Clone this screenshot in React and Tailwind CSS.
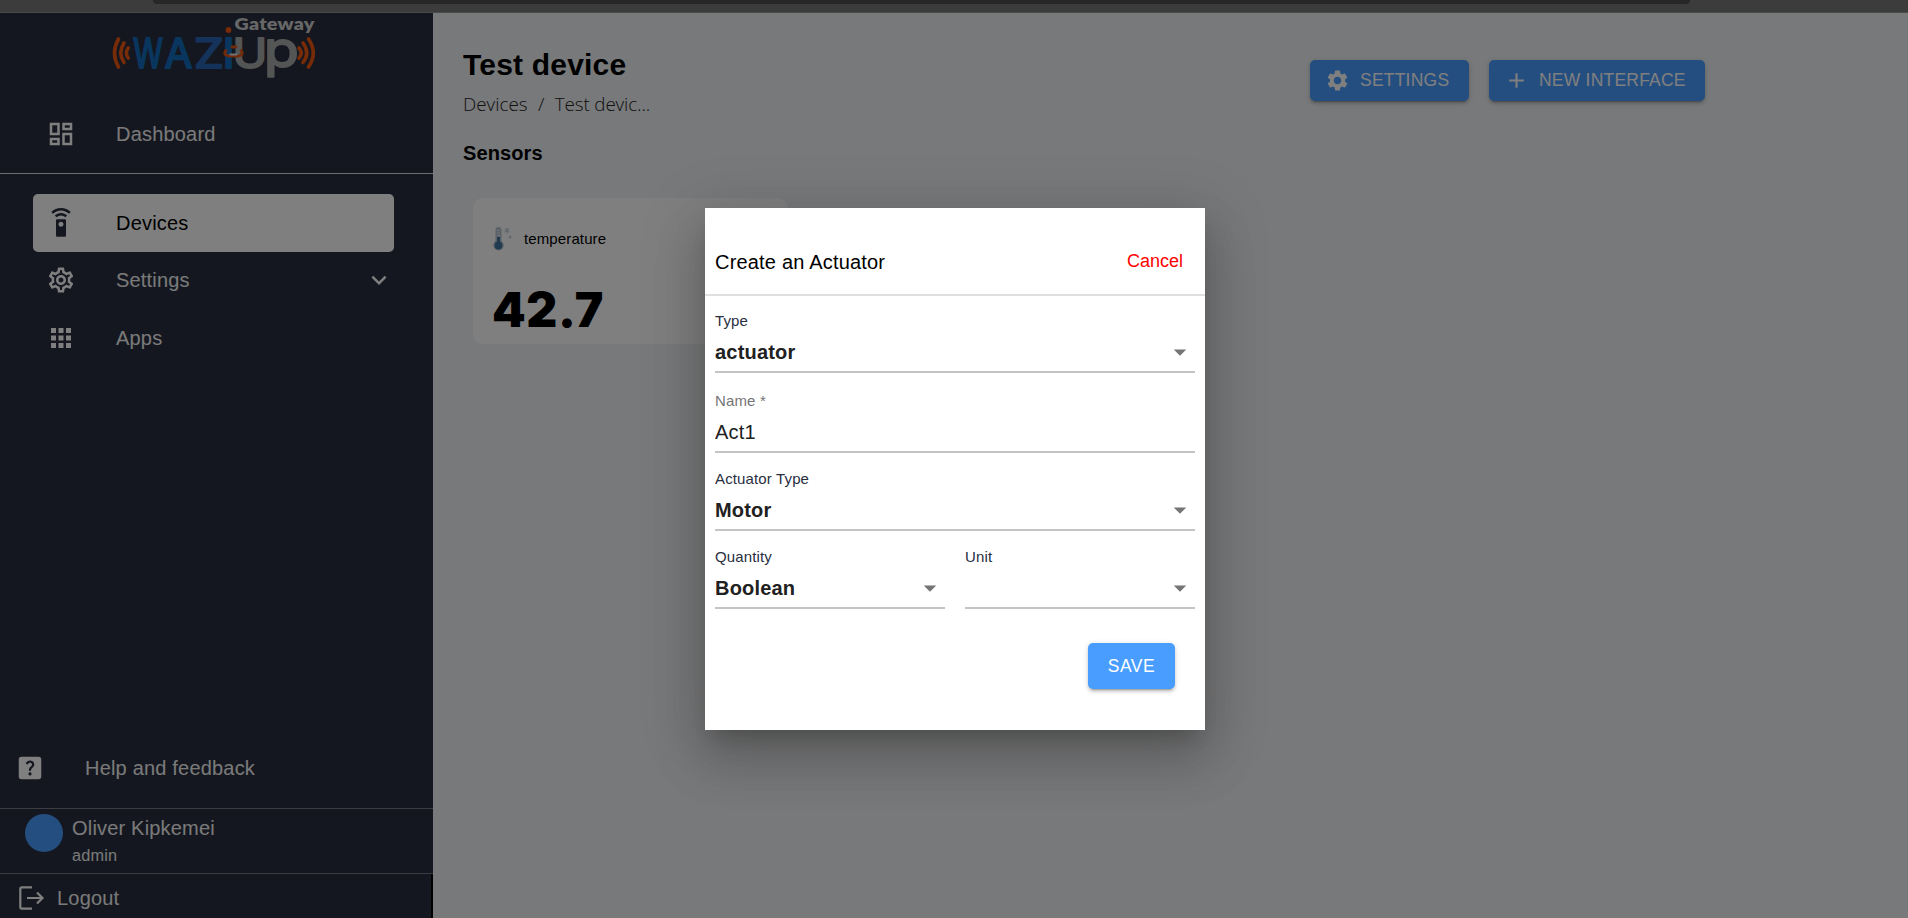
import {
  MdOutlineDashboard,
  MdSettingsRemote,
  MdOutlineSettings,
  MdApps,
  MdHelpCenter,
  MdSettings,
  MdAdd,
  MdArrowDropDown,
  MdExpandMore,
} from 'react-icons/md';

const sans = 'font-["Liberation_Sans",Arial,sans-serif]';

function Logo() {
  return (
    <svg className="h-[72px] w-[220px]" viewBox="0 0 220 72" fill="none" strokeLinecap="round" strokeLinejoin="round">
      <g stroke="#f0560f" strokeWidth="3.6">
        <path d="M13.500 26Q5.500 40 13.500 54M19 30Q12.500 40 19 49.500M23.200 35Q19.500 40 23.200 45" />
        <path d="M203.500 26Q213 40 203.500 54M198 30Q205.500 40 198 49.500M194 35Q198.500 40 194 45" />
      </g>
      <g fontFamily="Inter, sans-serif" fontSize="41" fontWeight="400" strokeWidth="2">
        <g fill="#136cbd" stroke="#136cbd">
          <text x="28" y="55" textLength="30" lengthAdjust="spacingAndGlyphs">W</text>
          <text x="59.500" y="55" textLength="28" lengthAdjust="spacingAndGlyphs">A</text>
          <text x="118" y="55" fontWeight="500">I</text>
        </g>
        <text x="89" y="55" textLength="30" lengthAdjust="spacingAndGlyphs" fill="#2a66b4" stroke="#2a66b4">Z</text>
        <g fill="#a9aaaa" stroke="#a9aaaa">
          <text x="127.500" y="55" textLength="35" lengthAdjust="spacingAndGlyphs">U</text>
          <text x="159" y="53.500" fontSize="50" textLength="35" lengthAdjust="spacingAndGlyphs">p</text>
        </g>
      </g>
      <circle cx="123.500" cy="17" r="2.900" fill="#f0560f" />
      <path d="M121 37.500Q117 42 125 43.200H132Q140 42 136 37.500M127 34H131" stroke="#e05718" strokeWidth="2.800" />
      <path d="M125.500 41.500H131.500" stroke="#e4e4e4" strokeWidth="2.200" />
      <text x="129.500" y="17" fontSize="16.500" textLength="80" lengthAdjust="spacingAndGlyphs" fill="#cfcfcf" fontWeight="800" fontFamily="Lato, sans-serif">Gateway</text>
    </svg>
  );
}

function NavItem({ icon: Icon, label, active, className = '', children }) {
  return (
    <div className={`flex h-[58px] shrink-0 items-center rounded-[5px] pl-[13px] pr-[15px] ${active ? 'bg-white text-black' : 'text-[#f4f4f4]'} ${className}`}>
      <Icon className={`size-[30px] ${active ? 'text-[#292f3f]' : 'text-white'}`} />
      <span className="ml-10 flex-1">{label}</span>
      {children}
    </div>
  );
}

function Sidebar() {
  return (
    <aside className="flex w-[433px] shrink-0 flex-col bg-[#292f3f] text-[20px] leading-[30px] tracking-[0.19px] text-[#f4f4f4]">
      <div className="flex h-[92px] pl-[105px]"><Logo /></div>
      <div className="h-[69px] border-b border-[#d8dde0] px-[33px]">
        <NavItem icon={MdOutlineDashboard} label="Dashboard" />
      </div>
      <nav className="flex flex-1 flex-col px-[33px] pt-5 pr-[39px]">
        <NavItem icon={MdSettingsRemote} label="Devices" active />
        <NavItem icon={MdOutlineSettings} label="Settings" className="-mt-px">
          <MdExpandMore className="-mr-[15px] size-[30px] text-white" />
        </NavItem>
        <NavItem icon={MdApps} label="Apps" />
      </nav>
      <div className="flex h-[81px] items-center border-b border-[#777b84] pb-px pl-[15px]">
        <MdHelpCenter className="size-[30px] text-white" />
        <span className="ml-10">Help and feedback</span>
      </div>
      <div className="flex h-[65px] border-b border-[#777b84] pl-[25px] pt-[5px]">
        <span className="size-[38px] rounded-full bg-[#499dff]" />
        <div className="ml-[9px]">
          <p className="-mt-px leading-[30px]">Oliver Kipkemei</p>
          <p className="text-[16.25px] leading-6">admin</p>
        </div>
      </div>
      <div className="flex h-[44px] items-center border-r-2 border-black pl-[19px] pt-1">
        <svg className="h-6 w-[26px]" viewBox="0 0 26 24" fill="none" stroke="#fff" strokeWidth="2.200">
          <path d="M13 1.300H3Q1.300 1.300 1.300 3V21Q1.300 22.700 3 22.700H13M8 12H24M18 6.500L23.500 12L18 17.500" />
        </svg>
        <span className="ml-3">Logout</span>
      </div>
    </aside>
  );
}

function Thermometer() {
  return (
    <svg className="h-[26px] w-5" viewBox="0 0 20 26" fill="none">
      <path d="M2.500 4a3 3 0 0 1 6 0V15a5.200 5.200 0 1 1-6 0Z" fill="#b4c2d0" />
      <circle cx="5.500" cy="19.500" r="3.900" fill="#41789c" />
      <path d="M5.500 11V19" stroke="#41789c" strokeWidth="3" />
      <path d="M4 4.500H7M4 7H7M4 9.500H7" stroke="#e8edf2" />
      <path d="M14 1.500V7.500M11.500 3L16.500 6M16.500 3L11.500 6M15.500 11H18.500M17 9.500V12.500" stroke="#b4c2d0" />
    </svg>
  );
}

function ActionButton({ className, children }) {
  return (
    <button className={`flex items-center rounded-[5px] bg-[#499dff] text-[17.5px] text-white shadow-[0_4px_1px_-3px_rgba(0,0,0,0.2),0_3px_3px_0_rgba(0,0,0,0.14),0_1px_6px_0_rgba(0,0,0,0.12)] ${className}`}>
      {children}
    </button>
  );
}

function Main() {
  return (
    <main className="flex-1 bg-[#f0f2f5] pl-[30px] text-black">
      <div className="flex">
        <div className="w-[847px]">
          <h1 className="pt-[34px] text-[30px] font-bold leading-9 tracking-[0.2px]">Test device</h1>
          <p className="mt-1 flex gap-[10.5px] font-['Open_Sans',sans-serif] text-[18.8px] font-light leading-[34px] text-[#222]">
            <span>Devices</span>
            <span>/</span>
            <span className="tracking-[-0.12px]">Test devic...</span>
          </p>
        </div>
        <div className="flex gap-5 pt-[47px]">
          <ActionButton className="h-[41px] w-[159px] pl-[15px] tracking-[0.22px]">
            <MdSettings className="mr-[10px] size-[25px]" />SETTINGS
          </ActionButton>
          <ActionButton className="h-[41px] w-[216px] pl-[15px] tracking-[0.22px]">
            <MdAdd className="mr-[10px] size-[25px]" />NEW INTERFACE
          </ActionButton>
        </div>
      </div>
      <h2 className="mt-[17px] text-[20px] font-bold leading-[30px] tracking-[0.1px]">Sensors</h2>
      <section className="ml-[10px] mt-[30px] h-[146px] w-[315px] rounded-[10px] bg-white pl-5 pt-7">
        <div className="flex items-center">
          <Thermometer />
          <span className="ml-[11px] text-[15px] leading-[26px] tracking-[0.12px]">temperature</span>
        </div>
        <p className="-ml-px mt-[28px] font-[Inter,sans-serif] text-[48px] font-black leading-[60px] tracking-[0.6px]">42.7</p>
      </section>
    </main>
  );
}

function Field({ label, value, select, muted, className = '' }) {
  return (
    <div className={`flex flex-col border-b-2 border-[#c4c4c4] pb-[2px] tracking-[0.19px] ${className}`}>
      <span className={`text-[15px] leading-5 tracking-[0.14px] ${muted ? 'text-[#757575]' : 'text-[#292f3f]'}`}>{label}</span>
      <div className="mt-1 flex h-[34px] items-center justify-between">
        <span className={`text-[20px] text-[#212121] ${select ? 'font-bold' : ''}`}>{value}</span>
        {select && <MdArrowDropDown className="size-[30px] text-[#757575]" />}
      </div>
    </div>
  );
}

function ActuatorDialog() {
  return (
    <div role="dialog" className="flex h-[521.5px] w-[500px] flex-col bg-white shadow-[0_14px_19px_-9px_rgba(0,0,0,0.2),0_30px_48px_4px_rgba(0,0,0,0.14),0_11px_58px_10px_rgba(0,0,0,0.12)]">
      <header className="flex h-[88px] items-center justify-between border-b-2 border-[#e0e0e0] pl-[10px] pr-[22px] pt-[21px]">
        <h2 className="text-[20px] tracking-[0.19px] text-black">Create an Actuator</h2>
        <button className="text-[18px] text-[#ff0000]">Cancel</button>
      </header>
      <div className="flex flex-col px-[10px] pt-[15px]">
        <Field label="Type" value="actuator" select />
        <Field label="Name *" value="Act1" muted className="mt-[18px]" />
        <Field label="Actuator Type" value="Motor" select className="mt-[16px]" />
        <div className="mt-[16px] grid grid-cols-2 gap-5">
          <Field label="Quantity" value="Boolean" select />
          <Field label="Unit" value="" select />
        </div>
      </div>
      <ActionButton className="mr-[30px] mt-[34px] h-[46px] w-[87px] justify-center self-end tracking-[0.5px]">SAVE</ActionButton>
    </div>
  );
}

export default function App() {
  return (
    <div className={`flex h-[918px] w-[1908px] flex-col overflow-hidden ${sans}`}>
      <div className="h-[13px] shrink-0 border-b border-[#494b4a] bg-[#3c3c3c] pl-[153px]">
        <div className="h-1 w-[1537px] rounded-b-[10px] bg-[#272727]" />
      </div>
      <div className="relative flex flex-1">
        <Sidebar />
        <Main />
        <div className="absolute inset-0 flex items-start justify-center bg-black/50 pl-[2px] pt-[195px]">
          <ActuatorDialog />
        </div>
      </div>
    </div>
  );
}
